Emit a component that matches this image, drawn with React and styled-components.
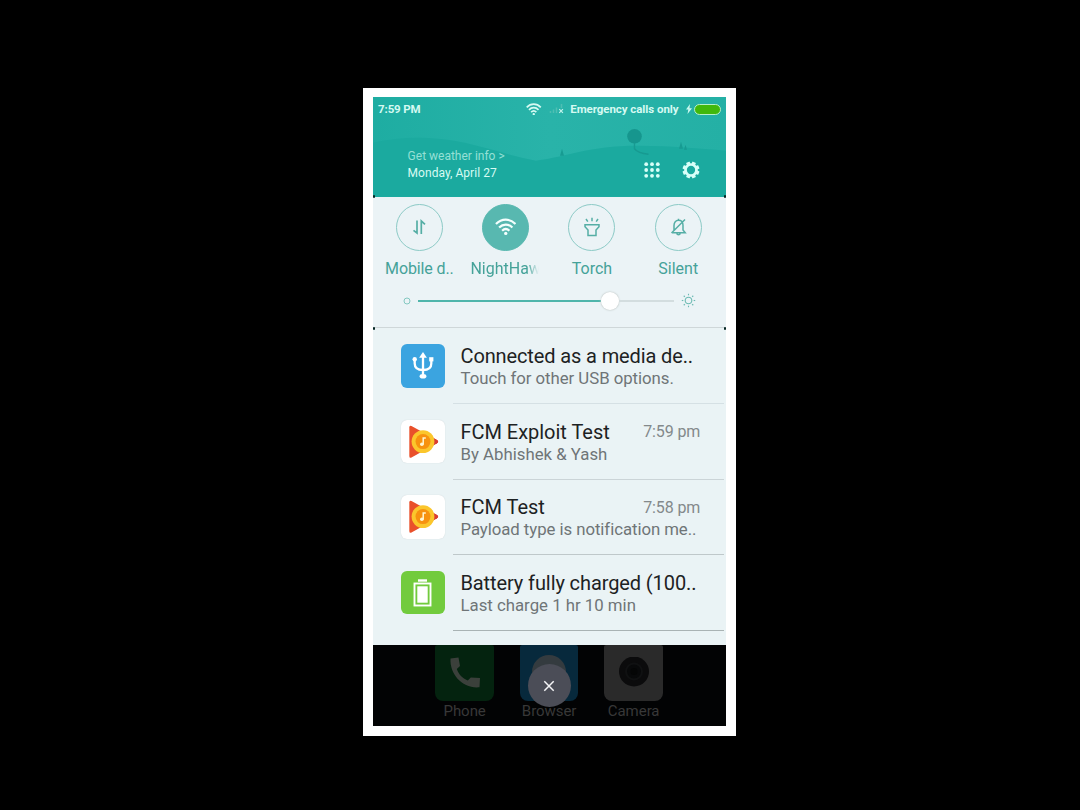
import React from "react";
import styled, { createGlobalStyle } from "styled-components";

const Global = createGlobalStyle`
  *, *::before, *::after { box-sizing: border-box; }
  body { margin: 0; background: #000; font-family: Roboto, "Liberation Sans", sans-serif; }
  svg { display: block; flex: none; }
`;

const Stage = styled.main`
  width: 1080px;
  height: 810px;
  padding: 87.5px 0 0 362.6px;
  background: #000;
  overflow: hidden;
`;
const Frame = styled.div`
  width: 373.7px;
  height: 648.8px;
  padding: 9.5px 10px 10.3px;
  background: #fff;
`;
const Screen = styled.div`
  height: 629px;
  display: flex;
  flex-direction: column;
  background: #020303;
  overflow: hidden;
`;

const Header = styled.header`
  position: relative;
  height: 99.5px;
  flex: none;
  background: #1aaa9f;
`;
const Scenery = styled.svg`
  position: absolute;
  inset: 0;
`;
const HeaderContent = styled.div`
  position: relative;
`;
const StatusBar = styled.div`
  height: 24.4px;
  display: flex;
  align-items: center;
  padding: 0 5px 0 5.5px;
  color: #d5faf2;
  font-size: 11.5px;
  line-height: 13px;
  font-weight: 700;
  white-space: nowrap;
`;
const Clock = styled.span`
  flex: 1;
  letter-spacing: -0.15px;
`;
const StatusSignal = styled.span`
  margin-left: 7.5px;
`;
const Carrier = styled.span`
  margin: 0 7.3px 0 6px;
  letter-spacing: -0.06px;
`;
const Battery = styled.span`
  width: 27.5px;
  height: 11px;
  margin-left: 2px;
  border: 1.3px solid #b5f0c8;
  border-radius: 6px;
  background: #41b80c;
`;
const WeatherRow = styled.div`
  display: flex;
  align-items: center;
  padding: 26.9px 26.3px 0 35px;
`;
const Weather = styled.div`
  flex: 1;
  font-size: 12px;
  line-height: 16.3px;
  letter-spacing: 0.04px;
  color: #d8fbf3;
`;
const WeatherLink = styled.div`
  color: #95e0d5;
  letter-spacing: 0;
`;
const HeaderActions = styled.div`
  display: flex;
  align-items: center;
  gap: 22px;
  padding-top: 11px;
`;

const Corners = styled.div`
  position: relative;
  &::before, &::after {
    content: "";
    position: absolute;
    z-index: 2;
    top: -1.5px;
    width: 2.5px;
    height: 3px;
    border-radius: 1.5px;
    background: #052522;
  }
  &::before { left: 0; }
  &::after { right: 0; }
`;
const QuickPanel = styled(Corners)`
  height: 130.5px;
  flex: none;
  background: #ebf3f6;
  padding-top: 7px;
`;
const Toggles = styled.div`
  display: grid;
  grid-template-columns: repeat(4, 86.3px);
  padding-left: 3.6px;
`;
const Toggle = styled.div`
  display: flex;
  flex-direction: column;
  align-items: center;
`;
const Disc = styled.div`
  width: 47px;
  height: 47px;
  border-radius: 50%;
  display: grid;
  place-items: center;
  border: 1px solid ${(p) => (p.$on ? "#58b8b0" : "#8ccac6")};
  background: ${(p) => (p.$on ? "#58b8b0" : "transparent")};
  color: ${(p) => (p.$on ? "#f4fffd" : "#55aea5")};
`;
const ToggleLabel = styled.div`
  min-width: 68px;
  margin-top: 8.2px;
  font-size: 16px;
  line-height: 20px;
  letter-spacing: ${(p) => p.$spacing || "0"};
  text-align: center;
  color: #45a299;
  white-space: nowrap;
  ${(p) => p.$fade && "mask-image: linear-gradient(90deg, #000 80%, transparent 97%);"}
`;
const Brightness = styled.div`
  display: flex;
  align-items: center;
  height: 20px;
  margin-top: 12.3px;
  padding-left: 30.8px;
`;
const Track = styled.div`
  display: flex;
  align-items: center;
  width: 255.5px;
  margin: 0 7px;
`;
const TrackPart = styled.span`
  height: ${(p) => (p.$filled ? "2px" : "1.5px")};
  width: ${(p) => (p.$filled ? "182.3px" : "auto")};
  flex: ${(p) => (p.$filled ? "none" : "1")};
  background: ${(p) => (p.$filled ? "#4fb5ab" : "#d3dddf")};
`;
const Knob = styled.span`
  width: 18px;
  height: 18px;
  border-radius: 50%;
  background: #fff;
  box-shadow: 0 0 1.5px 0.5px #c9d0cf;
`;

const Notifications = styled(Corners)`
  height: 317.5px;
  flex: none;
  padding-top: 0.7px;
  background: #eaf3f5;
  border-top: 1px solid #cfd7d9;
`;
const Notification = styled.article`
  display: flex;
  height: 75.6px;
  padding: 0 2.5px 0 28.6px;
`;
const IconTile = styled.div`
  width: 43.5px;
  height: 43.5px;
  margin-top: 15.5px;
  border-radius: 6px;
  display: grid;
  place-items: center;
  background: ${(p) => p.$color};
  box-shadow: 0 0 1px ${(p) => (p.$color === "#fff" ? "#c4cccd" : "transparent")};
`;
const Body = styled.div`
  flex: 1;
  min-width: 0;
  margin-left: 8px;
  padding: 15.4px 23.5px 0 7.8px;
  border-bottom: 1px solid ${(p) => p.$line};
  white-space: nowrap;
`;
const TitleLine = styled.div`
  display: flex;
  align-items: center;
  justify-content: space-between;
  height: 24px;
`;
const Title = styled.span`
  font-size: 20px;
  letter-spacing: ${(p) => p.$spacing};
  color: #1d2223;
`;
const Time = styled.time`
  font-size: 16px;
  letter-spacing: -0.1px;
  color: #83898b;
`;
const Detail = styled.div`
  font-size: 16.8px;
  line-height: 21px;
  letter-spacing: ${(p) => p.$spacing};
  color: #6f7577;
`;

const Dock = styled.footer`
  position: relative;
  flex: 1;
  display: flex;
  align-items: flex-start;
  gap: 26px;
  padding-left: 62.8px;
  overflow: hidden;
  background: #020304;
`;
const DockApp = styled.div`
  width: 58.5px;
  display: flex;
  flex-direction: column;
  align-items: center;
`;
const AppTile = styled.div`
  width: 58.5px;
  height: 56px;
  display: grid;
  place-items: center;
  border-radius: 2px 2px 8px 8px;
  background: ${(p) => p.$color};
`;
const AppLabel = styled.div`
  margin-top: 1px;
  font-size: 15px;
  line-height: 19px;
  letter-spacing: -0.05px;
  color: #383838;
`;
const CloseButton = styled.button`
  position: absolute;
  left: 155px;
  top: 19.5px;
  width: 43px;
  height: 43px;
  padding: 0;
  border: 0;
  border-radius: 50%;
  display: grid;
  place-items: center;
  background: #4b4d57;
`;

const Wifi = ({ size, stroke = 2.3 }) => (
  <svg width={size} height={size * 0.8} viewBox="0 0 22 17.6" fill="none" stroke="currentColor" strokeWidth={stroke}>
    <path d="M1 6.200C6.800.200 15.200.200 21 6.200M4.200 9.700c4-4 9.600-4 13.600 0M7.300 13c2.200-2.100 5.200-2.100 7.400 0" />
    <circle cx="11" cy="15.800" r="1.700" fill="currentColor" stroke="none" />
  </svg>
);

const HeaderScene = () => (
  <Scenery width="354" height="99.5" viewBox="0 0 354 100" preserveAspectRatio="none">
    <defs>
      <linearGradient id="sky" x1="0" y1="0" x2="1" y2="0">
        <stop offset="0" stopColor="#1eada2" />
        <stop offset=".5" stopColor="#29b3a9" />
        <stop offset="1" stopColor="#24b0a5" />
      </linearGradient>
    </defs>
    <rect width="354" height="100" fill="url(#sky)" />
    <path d="M0 46C22 41 45 40 65 42 100 45 130 58 163 64 195 60 215 49 265 49c35 0 60 3 89 5v46H0z" fill="#1baa9f" />
    <circle cx="261.500" cy="39.500" r="7.300" fill="#16968e" />
    <path d="M261.500 46v6c3 4 8 5 14 5.500" fill="none" stroke="#179a91" strokeWidth="1.400" />
    <path d="M187 59l2-7 2 7zM306 52l2-7 2 7zM311 53l1.500-5 1.500 5z" fill="#179b92" />
  </Scenery>
);

const Signal = () => (
  <svg width="15" height="10" viewBox="0 0 15 10" fill="none">
    <path d="M1.500 9V7M4.500 9V5.500M7.500 9V3.500M12.500 4V0" stroke="#4fbeb3" strokeWidth="1.500" />
    <path d="M10.300 5.200l3.600 3.600M13.900 5.200l-3.600 3.600" stroke="#c0f3eb" strokeWidth="1.200" />
  </svg>
);
const Bolt = () => (
  <svg width="6" height="10" viewBox="0 0 6 10"><path d="M4 0L0 5.600h2.300L1.500 10 6 4.200H3.500z" fill="#c9f7ee" /></svg>
);
const Dots = () => (
  <svg width="16" height="16" viewBox="0 0 16 16" fill="#d8fff8">
    {[2.2, 8, 13.8].map((y) => [2.2, 8, 13.8].map((x) => <circle key={`${x}-${y}`} cx={x} cy={y} r="1.9" />))}
  </svg>
);
const Gear = () => (
  <svg width="18" height="18" viewBox="-9 -9 18 18" fill="none">
    <circle r="5.500" stroke="#d8fff8" strokeWidth="2.700" />
    {[0, 45, 90, 135, 180, 225, 270, 315].map((a) => (
      <rect key={a} x="-1.900" y="-8.500" width="3.800" height="3" rx=".6" fill="#d8fff8" transform={`rotate(${a + 22.5})`} />
    ))}
  </svg>
);
const DataArrows = () => (
  <svg width="14" height="16" viewBox="0 0 14 16" fill="none" stroke="currentColor" strokeWidth="1.700">
    <path d="M5 1.500v12.500L1.500 11.300M9.300 15V2L13 5.300" />
  </svg>
);
const Torch = () => (
  <svg width="16" height="20" viewBox="0 0 16 20" fill="none" stroke="currentColor" strokeWidth="1.500">
    <path d="M1 7.800h14v2L12 13v5.500H4V13L1 9.800zM8 .8v3.400M2 2l1.800 2.700M14 2l-1.800 2.700" />
  </svg>
);
const Muted = () => (
  <svg width="17" height="18" viewBox="0 0 17 18" fill="none" stroke="currentColor" strokeWidth="1.500">
    <path d="M4 12.500V7.500C4 4.300 5.800 2.300 8.500 2.300S13 4.300 13 7.500V12l2.200 2.700H2M15 1.500L1.500 15M6.800 15.500c.4 1.600 3 1.600 3.400 0M8.500 .8v1.500" />
  </svg>
);
const DimIcon = () => (
  <svg width="8" height="8" viewBox="0 0 8 8"><circle cx="4" cy="4" r="3" fill="none" stroke="#84c8c1" /></svg>
);
const Sun = () => (
  <svg width="15" height="15" viewBox="-7.5 -7.5 15 15" fill="none" stroke="#6bbab2" strokeWidth="1.100">
    <circle r="3.300" />
    {[0, 45, 90, 135, 180, 225, 270, 315].map((a) => <path key={a} d="M0-5.200V-6.700" transform={`rotate(${a})`} />)}
  </svg>
);
const Usb = () => (
  <svg width="22" height="27" viewBox="0 0 22 27" fill="none" stroke="#fff" strokeWidth="2.300">
    <path d="M11 4v20M2.700 8v3.500c0 4 3 6.500 8.300 6.500s8.300-2.500 8.300-6.500V8" />
    <path d="M11 0l3.900 5.700H7.100z" fill="#fff" stroke="none" />
    <circle cx="2.700" cy="7.300" r="2.200" fill="#fff" stroke="none" />
    <rect x="17.200" y="5.200" width="4.200" height="4.200" fill="#fff" stroke="none" />
    <ellipse cx="11" cy="24.300" rx="3.400" ry="2.300" fill="#fff" stroke="none" />
  </svg>
);
const PlayMusic = () => (
  <svg width="44" height="44" viewBox="0 0 44 44">
    <path d="M8.300 7.500Q8.300 5 10.500 6.100L36 20q2.300 1.600 0 3.300L10.500 37.600q-2.200.9-2.200-1.600z" fill="#e9502b" />
    <path d="M32 17.800l4 2.200q2.300 1.600 0 3.300l-4 2.200z" fill="#d83c33" />
    <circle cx="22" cy="21.600" r="11.400" fill="#fbc62c" />
    <circle cx="22" cy="21.600" r="7.500" fill="#f7920f" />
    <ellipse cx="20.900" cy="24.200" rx="1.900" ry="1.700" fill="#fff6d2" />
    <path d="M22.200 24.200v-6.200h2.600" fill="none" stroke="#fff6d2" strokeWidth="1.500" />
  </svg>
);
const BatteryIcon = () => (
  <svg width="19" height="28" viewBox="0 0 19 28" fill="none">
    <path d="M5 1.500h9" stroke="#fff" strokeWidth="2.400" />
    <rect x="1.500" y="4.500" width="16" height="22" stroke="#fff" strokeWidth="1.900" />
    <rect x="4.300" y="7.300" width="10.400" height="16.400" fill="#fff" />
  </svg>
);
const PhoneIcon = () => (
  <svg width="32" height="32" viewBox="0 0 32 32" fill="#3b403b">
    <path d="M1.500 1.500L9.500 .5l1.500 8.500-3.200 3c2 5.500 5.500 9 11 11.500l3-3 9.200.5-.5 9.300C14 32 .5 17.500 1.500 1.500z" />
  </svg>
);
const BrowserIcon = () => (
  <svg width="58" height="56" viewBox="0 0 58 56"><circle cx="29" cy="27" r="17" fill="#343b3f" /></svg>
);
const CameraIcon = () => (
  <svg width="32" height="32" viewBox="0 0 32 32">
    <circle cx="16" cy="14.500" r="15" fill="#0b0b0c" />
    <circle cx="16" cy="14.500" r="8" fill="#08090a" stroke="#101112" strokeWidth="2" />
    <circle cx="16" cy="14.500" r="3.500" fill="#050606" />
  </svg>
);

const toggles = [
  { label: "Mobile d..", icon: <DataArrows />, spacing: "-0.13px" },
  { label: "NightHaw", icon: <Wifi size={21.5} />, on: true },
  { label: "Torch", icon: <Torch /> },
  { label: "Silent", icon: <Muted /> },
];
const notifications = [
  { title: "Connected as a media de..", detail: "Touch for other USB options.", icon: <Usb />, color: "#3ba4e0", line: "#d5e0e4", ts: "-0.12px", ds: "-0.04px" },
  { title: "FCM Exploit Test", detail: "By Abhishek & Yash", time: "7:59 pm", icon: <PlayMusic />, color: "#fff", line: "#cbd4d7", ts: "-0.03px", ds: "0" },
  { title: "FCM Test", detail: "Payload type is notification me..", time: "7:58 pm", icon: <PlayMusic />, color: "#fff", line: "#bfc8ca", ts: "-0.03px", ds: "-0.06px" },
  { title: "Battery fully charged (100..", detail: "Last charge 1 hr 10 min", icon: <BatteryIcon />, color: "#72cb3d", line: "#a9b3b4", ts: "-0.1px", ds: "0" },
];
const dockApps = [
  { name: "Phone", color: "#04230f", icon: <PhoneIcon /> },
  { name: "Browser", color: "#07293c", icon: <BrowserIcon /> },
  { name: "Camera", color: "#2a2a2a", icon: <CameraIcon /> },
];

export default function App() {
  return (
    <Stage>
      <Global />
      <Frame>
        <Screen>
          <Header>
            <HeaderScene />
            <HeaderContent>
              <StatusBar>
                <Clock>7:59 PM</Clock>
                <Wifi size={15.5} stroke={2.4} />
                <StatusSignal><Signal /></StatusSignal>
                <Carrier>Emergency calls only</Carrier>
                <Bolt />
                <Battery />
              </StatusBar>
              <WeatherRow>
                <Weather>
                  <WeatherLink>Get weather info &gt;</WeatherLink>
                  <div>Monday, April 27</div>
                </Weather>
                <HeaderActions>
                  <Dots />
                  <Gear />
                </HeaderActions>
              </WeatherRow>
            </HeaderContent>
          </Header>
          <QuickPanel>
            <Toggles>
              {toggles.map((t) => (
                <Toggle key={t.label}>
                  <Disc $on={t.on}>{t.icon}</Disc>
                  <ToggleLabel $fade={t.on} $spacing={t.spacing}>{t.label}</ToggleLabel>
                </Toggle>
              ))}
            </Toggles>
            <Brightness>
              <DimIcon />
              <Track>
                <TrackPart $filled />
                <Knob />
                <TrackPart />
              </Track>
              <Sun />
            </Brightness>
          </QuickPanel>
          <Notifications>
            {notifications.map((n) => (
              <Notification key={n.title}>
                <IconTile $color={n.color}>{n.icon}</IconTile>
                <Body $line={n.line}>
                  <TitleLine>
                    <Title $spacing={n.ts}>{n.title}</Title>
                    {n.time && <Time>{n.time}</Time>}
                  </TitleLine>
                  <Detail $spacing={n.ds}>{n.detail}</Detail>
                </Body>
              </Notification>
            ))}
          </Notifications>
          <Dock>
            {dockApps.map((a) => (
              <DockApp key={a.name}>
                <AppTile $color={a.color}>{a.icon}</AppTile>
                <AppLabel>{a.name}</AppLabel>
              </DockApp>
            ))}
            <CloseButton aria-label="Close">
              <svg width="12" height="12" viewBox="0 0 12 12" stroke="#f4f4f6" strokeWidth="1.500"><path d="M1.300 1.300l9.400 9.400M10.700 1.300l-9.400 9.400" /></svg>
            </CloseButton>
          </Dock>
        </Screen>
      </Frame>
    </Stage>
  );
}
